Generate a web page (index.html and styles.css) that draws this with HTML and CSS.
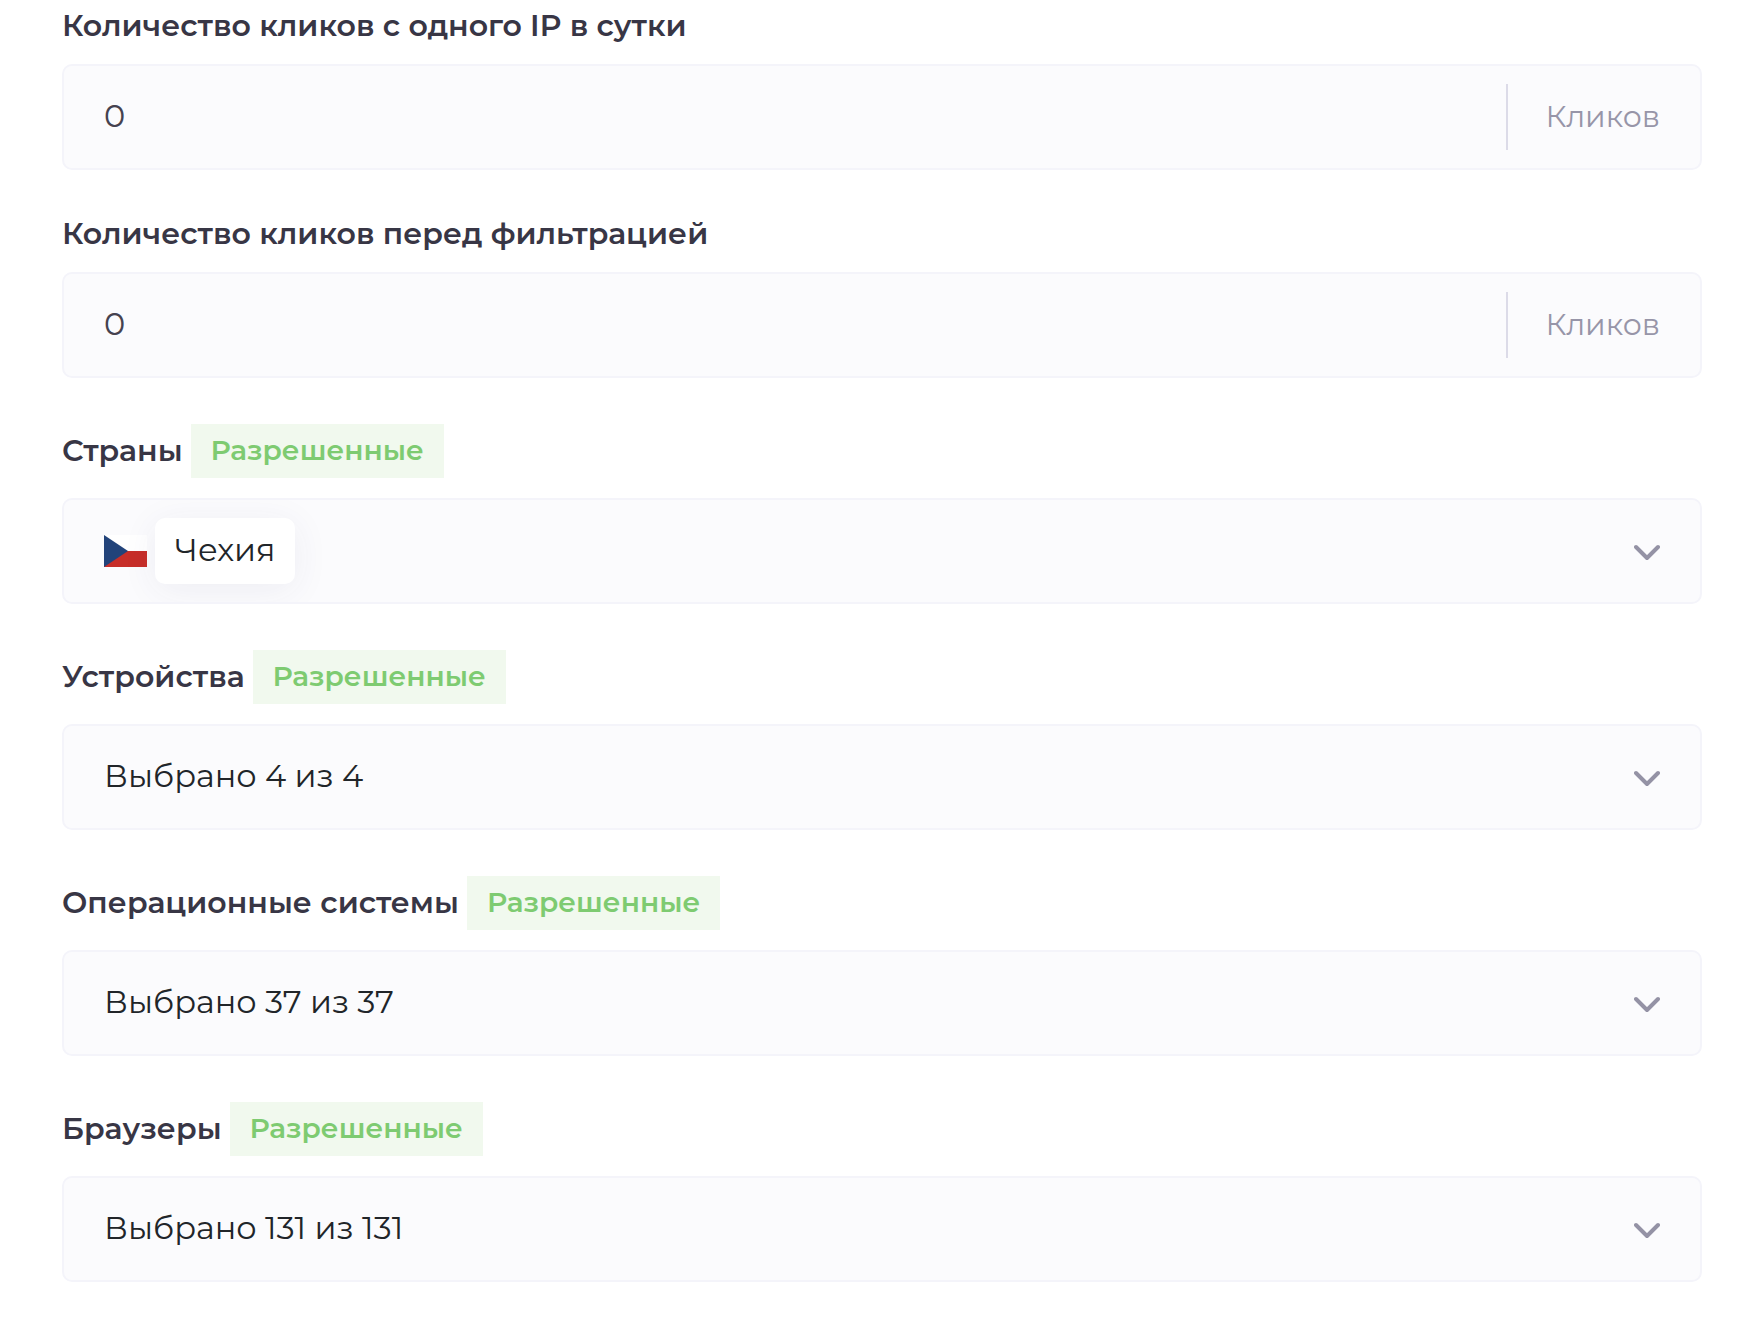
FILE: index.html
```html
<!DOCTYPE html>
<html lang="ru">
<head>
    <meta charset="UTF-8">
    <meta name="viewport" content="width=device-width, initial-scale=1.0">
    <title>Фильтры кликов</title>
    <link rel="stylesheet" href="styles.css">
</head>
<body>
    <form class="filters">
        <div class="group">
            <div class="group-head">
                <label for="clicksPerIp">Количество кликов с одного IP в сутки</label>
            </div>
            <div class="field">
                <input type="text" id="clicksPerIp" inputmode="numeric" value="0">
                <span class="unit">Кликов</span>
            </div>
        </div>
        <div class="group">
            <div class="group-head">
                <label for="clicksBefore">Количество кликов перед фильтрацией</label>
            </div>
            <div class="field">
                <input type="text" id="clicksBefore" inputmode="numeric" value="0">
                <span class="unit">Кликов</span>
            </div>
        </div>
        <div class="group">
            <div class="group-head">
                <label for="countries">Страны</label>
                <span class="badge">Разрешенные</span>
            </div>
            <button type="button" class="field" id="countries" aria-haspopup="listbox">
                <svg class="flag" viewBox="0 0 43 32" aria-hidden="true">
                    <path fill="#fff" d="M0 0h43v16H0z"/>
                    <path fill="#c72e29" d="M0 16h43v16H0z"/>
                    <path fill="#22437a" d="M0 0l24 16L0 32z"/>
                </svg>
                <span class="chip">Чехия</span>
                <svg class="chevron" viewBox="0 0 26 20" aria-hidden="true"><path d="M2 6l11 11L24 6"/></svg>
            </button>
        </div>
        <div class="group">
            <div class="group-head">
                <label for="devices">Устройства</label>
                <span class="badge">Разрешенные</span>
            </div>
            <div class="field">
                <select id="devices">
                    <option>Выбрано 4 из 4</option>
                </select>
                <svg class="chevron" viewBox="0 0 26 20" aria-hidden="true"><path d="M2 6l11 11L24 6"/></svg>
            </div>
        </div>
        <div class="group">
            <div class="group-head">
                <label for="systems">Операционные системы</label>
                <span class="badge">Разрешенные</span>
            </div>
            <div class="field">
                <select id="systems">
                    <option>Выбрано 37 из 37</option>
                </select>
                <svg class="chevron" viewBox="0 0 26 20" aria-hidden="true"><path d="M2 6l11 11L24 6"/></svg>
            </div>
        </div>
        <div class="group">
            <div class="group-head">
                <label for="browsers">Браузеры</label>
                <span class="badge">Разрешенные</span>
            </div>
            <div class="field">
                <select id="browsers">
                    <option>Выбрано 131 из 131</option>
                </select>
                <svg class="chevron" viewBox="0 0 26 20" aria-hidden="true"><path d="M2 6l11 11L24 6"/></svg>
            </div>
        </div>
    </form>
</body>
</html>
```
FILE: styles.css
```css
* {
    box-sizing: border-box;
}
body {
    margin: 0;
    background-color: #fff;
    color: #383645;
    font-family: Montserrat, Inter, "Open Sans", sans-serif;
}
.filters {
    display: flex;
    flex-direction: column;
    gap: 46px;
    padding: 8px 56px 58px 62px;
}
.group-head {
    display: flex;
    align-items: center;
    gap: 8px;
    margin-bottom: 20px;
    font-size: 30px;
    font-weight: 600;
    line-height: 36px;
}
.badge {
    padding: 8px 20px 10px;
    background-color: #f1f9ee;
    color: #7ecb71;
    font-size: 28px;
}
.field {
    display: flex;
    align-items: center;
    width: 100%;
    height: 106px;
    padding: 0 40px;
    border: 2px solid #f4f4fa;
    border-radius: 10px;
    background-color: #fbfbfd;
    color: #212529;
    font-family: inherit;
    font-size: 32px;
    text-align: left;
    overflow: hidden;
}
.field input,
.field select {
    flex: 1;
    min-width: 0;
    height: 100%;
    padding: 0 0 3px;
    border: none;
    outline: none;
    background: none;
    color: inherit;
    font: inherit;
    appearance: none;
}
.field input {
    color: #45424f;
}
.unit {
    padding: 15px 0 15px 38px;
    border-left: 2px solid #dcdbe8;
    color: #9795a8;
    font-size: 30px;
    line-height: 36px;
}
.flag {
    width: 43px;
    height: 32px;
    margin-right: 8px;
}
.chip {
    padding: 12px 20px 14px;
    border-radius: 10px;
    background-color: #fff;
    box-shadow: 0 6px 36px rgba(60, 50, 120, 0.07);
    line-height: 40px;
}
.chevron {
    width: 26px;
    height: 20px;
    margin-left: auto;
    fill: none;
    stroke: #9492a5;
    stroke-width: 4;
    stroke-linecap: round;
    stroke-linejoin: round;
}
```
